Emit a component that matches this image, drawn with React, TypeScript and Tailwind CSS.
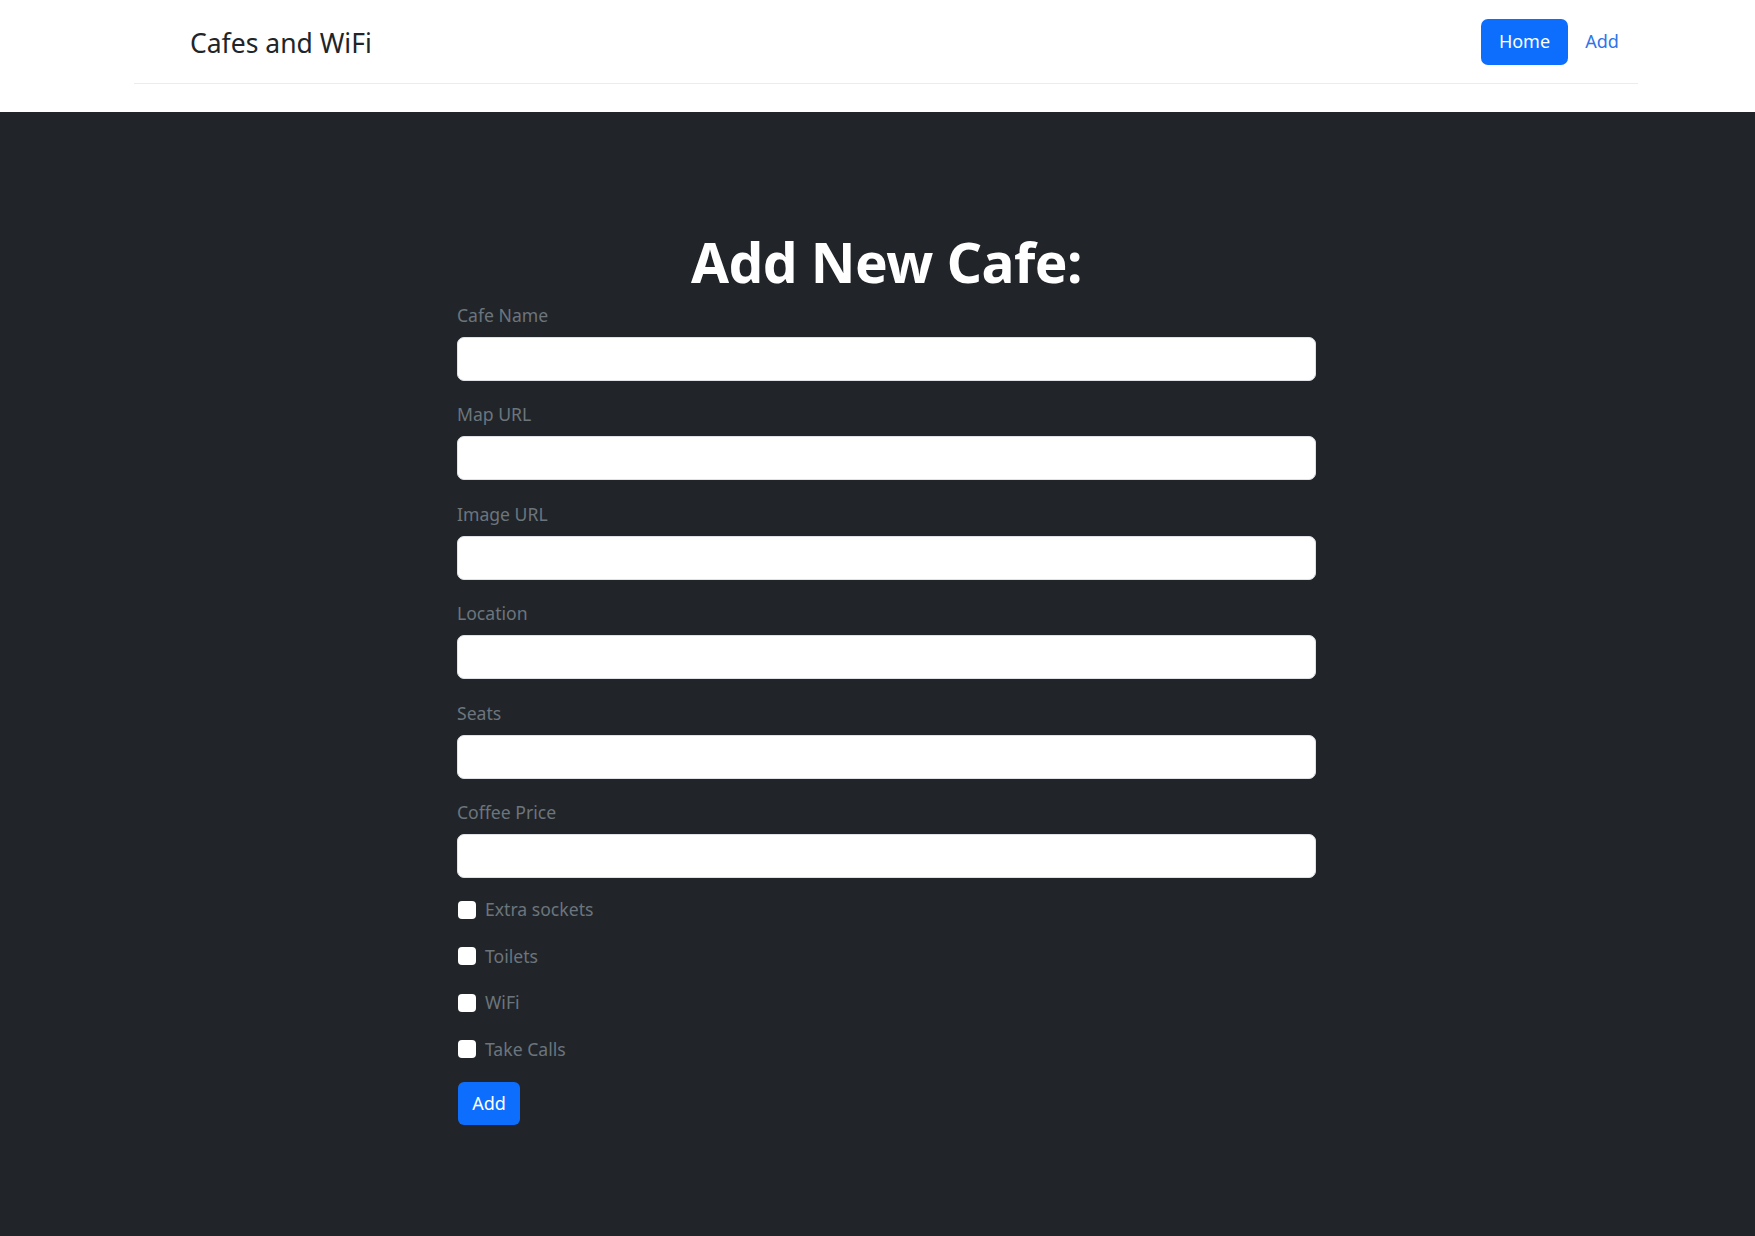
import React from "react";

const fields = ["Cafe Name", "Map URL", "Image URL", "Location", "Seats", "Coffee Price"];
const checks = ["Extra sockets", "Toilets", "WiFi", "Take Calls"];

export default function App() {
  return (
    <div
      className="min-h-[1236px] w-full bg-[#212529]"
      style={{ fontFamily: '"Noto Sans", "Open Sans", sans-serif' }}
    >
      <header className="bg-white h-[112px]">
        <div className="ml-[134px] w-[1504px] h-[84px] border-b border-[#ececec] flex items-center">
          <div className="ml-[56px] pt-[4px] text-[26.5px] text-[#212529] leading-none">Cafes and WiFi</div>
          <nav className="ml-auto mr-[2px] flex items-center">
            <a className="h-[46px] w-[87px] rounded-[7px] bg-[#0d6efd] text-white text-[18px] flex items-center justify-center">
              Home
            </a>
            <a className="w-[68px] text-center text-[18px] text-[#2f74e8]">Add</a>
          </nav>
        </div>
      </header>
      <main className="ml-[457px] w-[859px] pt-[112px] pb-[100px]">
        <h1 className="text-center text-white font-bold text-[55px] leading-[76px] tracking-[-0.5px]">
          Add New Cafe:
        </h1>
        {fields.map((f) => (
          <div key={f} className="mb-[18.4px]">
            <label className="block pt-[2px] text-[17.6px] leading-[27px] text-[#6c757d] mb-[8px]">{f}</label>
            <input
              type="text"
              className="block w-full h-[44px] rounded-[7px] bg-white border border-[#dee2e6] outline-none"
            />
          </div>
        ))}
        <div className="mt-[8px]">
          {checks.map((c) => (
            <div key={c} className="flex items-center h-[27px] mb-[19.4px]">
              <span className="w-[18px] h-[18px] rounded-[4px] bg-white ml-[1px]" />
              <span className="ml-[9px] text-[17.6px] text-[#6c757d] leading-[27px]">{c}</span>
            </div>
          ))}
        </div>
        <button className="ml-[1px] w-[62px] h-[43px] rounded-[6px] bg-[#0d6efd] text-white text-[18px] flex items-center justify-center">
          Add
        </button>
      </main>
    </div>
  );
}
